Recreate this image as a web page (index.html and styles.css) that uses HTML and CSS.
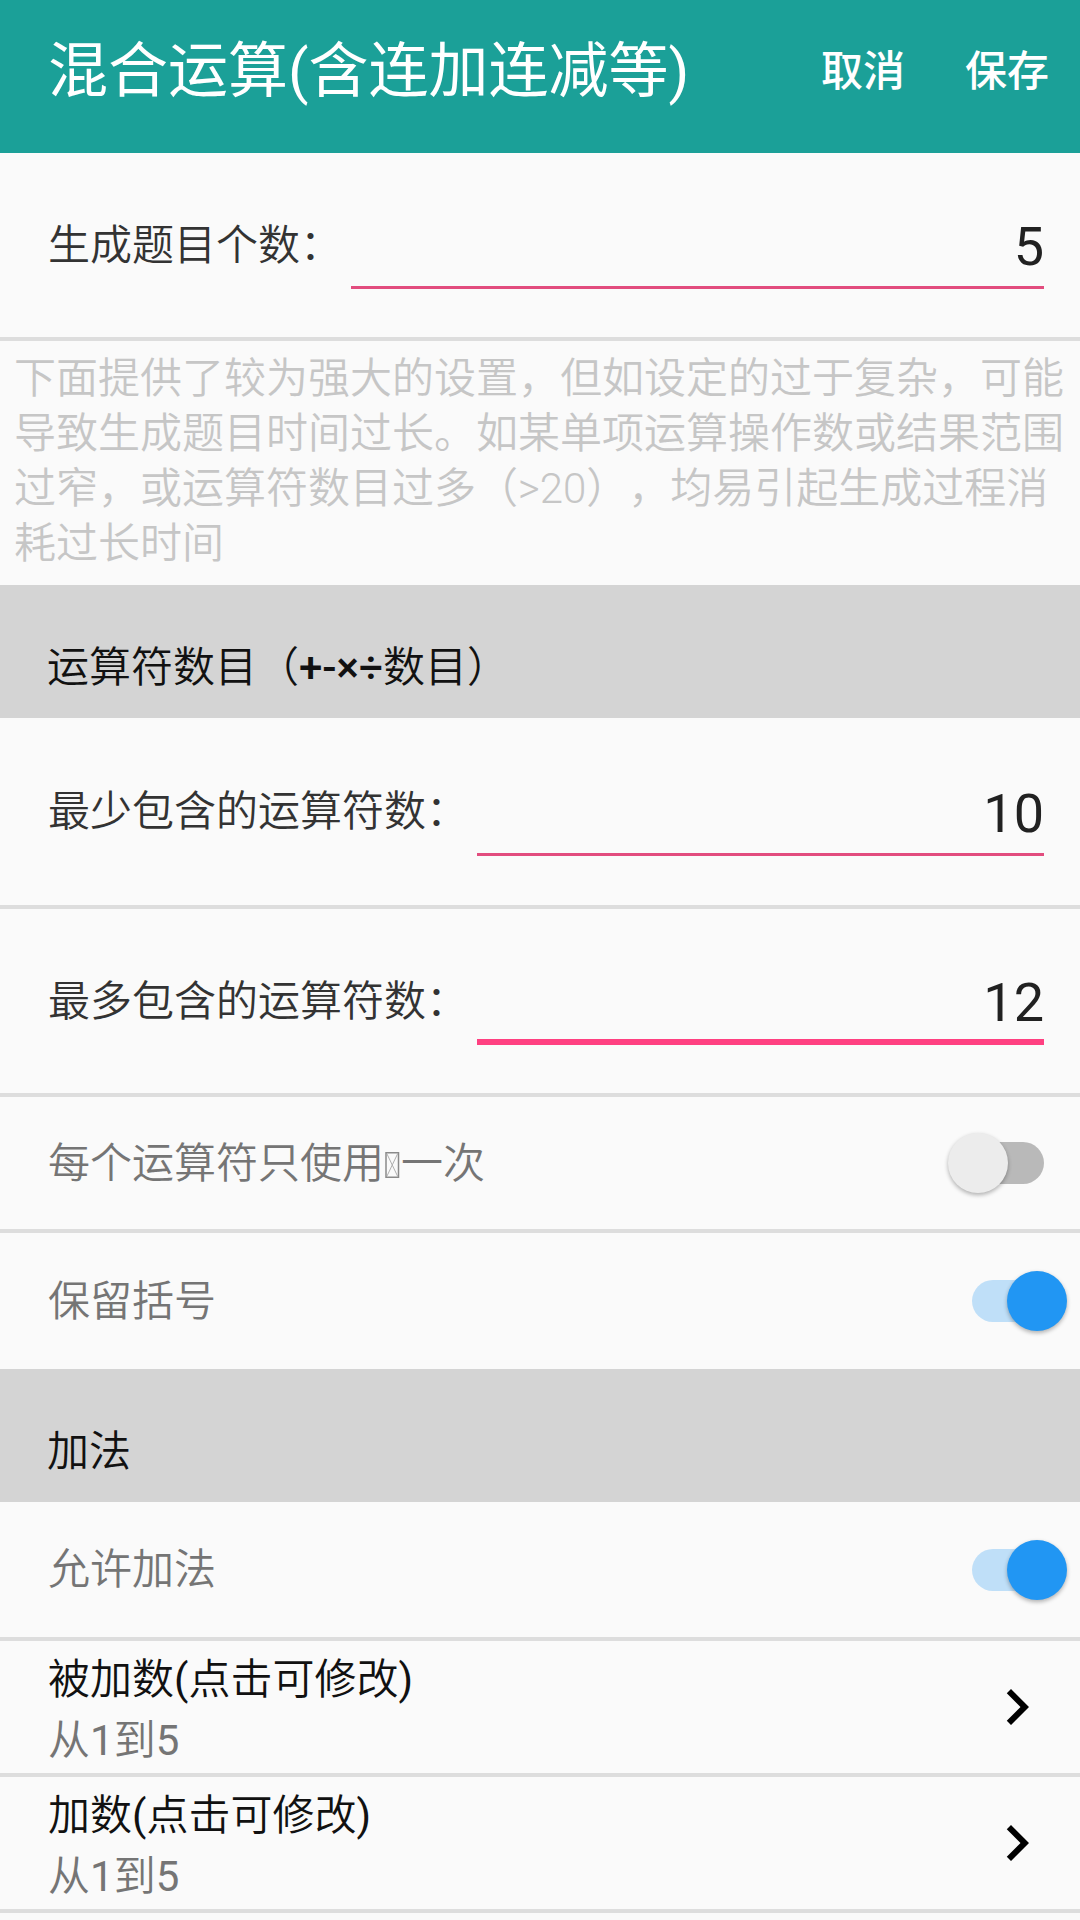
FILE: index.html
```html
<!DOCTYPE html>
<html lang="zh-CN">
<head>
<meta charset="utf-8">
<title>混合运算</title>
<link rel="stylesheet" href="styles.css">
</head>
<body>
<header class="toolbar">
  <div class="toolbar-title">混合运算(含连加连减等)</div>
  <div class="toolbar-actions">
    <span>取消</span>
    <span>保存</span>
  </div>
</header>

<div class="edit-row h184">
  <div class="edit-label">生成题目个数：</div>
  <div class="edit-input">5</div>
</div>
<div class="divider"></div>

<div class="desc">下面提供了较为强大的设置，但如设定的过于复杂，可能导致生成题目时间过长。如某单项运算操作数或结果范围过窄，或运算符数目过多（&gt;20），均易引起生成过程消耗过长时间</div>

<div class="section">运算符数目（<span class="ops">+-×÷</span>数目）</div>

<div class="edit-row h187">
  <div class="edit-label">最少包含的运算符数：</div>
  <div class="edit-input">10</div>
</div>
<div class="divider"></div>

<div class="edit-row h184">
  <div class="edit-label">最多包含的运算符数：</div>
  <div class="edit-input focused">12</div>
</div>
<div class="divider"></div>

<div class="toggle-row h132">
  <div class="toggle-label">每个运算符只使用<svg class="tofu" width="17" height="26" viewBox="0 0 17 26"><rect x="2" y="0.75" width="12.5" height="24.5" fill="none" stroke="#8a8a8a" stroke-width="1.5"/><path d="M3 2L13.5 24M13.5 2L3 24" stroke="#b0b0b0" stroke-width="1"/></svg>一次</div>
  <div class="switch"><div class="switch-track"></div><div class="switch-thumb"></div></div>
</div>
<div class="divider"></div>

<div class="toggle-row h136">
  <div class="toggle-label">保留括号</div>
  <div class="switch on"><div class="switch-track"></div><div class="switch-thumb"></div></div>
</div>

<div class="section">加法</div>

<div class="toggle-row h135">
  <div class="toggle-label">允许加法</div>
  <div class="switch on"><div class="switch-track"></div><div class="switch-thumb"></div></div>
</div>
<div class="divider"></div>

<div class="nav-row">
  <div class="nav-text">
    <div class="nav-title">被加数<span class="lat">(</span>点击可修改<span class="lat">)</span></div>
    <div class="nav-sub">从<span class="lat">1</span>到<span class="lat">5</span></div>
  </div>
  <svg class="chevron" width="72" height="72" viewBox="0 0 24 24"><path d="M10 6L8.59 7.41 13.17 12l-4.58 4.59L10 18l6-6z" fill="#000"/></svg>
</div>
<div class="divider"></div>

<div class="nav-row">
  <div class="nav-text">
    <div class="nav-title">加数<span class="lat">(</span>点击可修改<span class="lat">)</span></div>
    <div class="nav-sub">从<span class="lat">1</span>到<span class="lat">5</span></div>
  </div>
  <svg class="chevron" width="72" height="72" viewBox="0 0 24 24"><path d="M10 6L8.59 7.41 13.17 12l-4.58 4.59L10 18l6-6z" fill="#000"/></svg>
</div>
<div class="divider"></div>
</body>
</html>
```

FILE: styles.css
```css
* {
  box-sizing: border-box;
}

html, body {
  margin: 0;
  padding: 0;
}

body {
  width: 1080px;
  min-height: 1920px;
  background: #fafafa;
  font-family: Roboto, "Noto Sans CJK SC", sans-serif;
  text-spacing-trim: space-all;
  overflow: hidden;
}

.toolbar {
  height: 153px;
  background: #1ba098;
  color: #ffffff;
  display: flex;
  align-items: center;
  padding: 0 31px 10px 48px;
}

.toolbar-title {
  flex: 1;
  font-size: 60px;
  line-height: 70px;
  white-space: nowrap;
}

.toolbar-actions {
  display: flex;
  gap: 60px;
  font-size: 42px;
  line-height: 49px;
  font-weight: 500;
}

.divider {
  height: 4px;
  background: #dddddd;
}

.edit-row {
  display: flex;
  align-items: center;
  padding: 0 36px 0 48px;
}

.h184 { height: 184px; }
.h187 { height: 187px; }
.h132 { height: 132px; }
.h135 { height: 135px; }
.h136 { height: 136px; }

.lat {
  font-weight: 400;
}

.ops {
  font-weight: 500;
}

.edit-label {
  font-size: 42px;
  line-height: 49px;
  font-weight: 350;
  color: #333333;
  white-space: nowrap;
}

.edit-input {
  flex: 1;
  margin-left: 9px;
  margin-top: 14px;
  font-size: 54px;
  line-height: 63px;
  color: #212121;
  text-align: right;
  padding-bottom: 8px;
  border-bottom: 3px solid #e24c7e;
}

.edit-input.focused {
  padding-bottom: 5px;
  border-bottom: 6px solid #ff4081;
}

.desc {
  height: 244px;
  padding: 10px 12px 0 14px;
  font-size: 42px;
  line-height: 55px;
  font-weight: 350;
  color: #c6c6c6;
  overflow: hidden;
}

.section {
  height: 133px;
  background: #d4d4d4;
  padding: 58px 0 0 47px;
  font-size: 42px;
  line-height: 49px;
  font-weight: 350;
  color: #111111;
  overflow: hidden;
}

.toggle-row {
  display: flex;
  align-items: center;
  padding: 0 12px 0 48px;
}

.toggle-label {
  flex: 1;
  font-size: 42px;
  line-height: 49px;
  font-weight: 350;
  color: #757575;
  white-space: nowrap;
}

.tofu {
  vertical-align: baseline;
}

.switch {
  position: relative;
  width: 120px;
  height: 60px;
  flex: none;
}

.switch-track {
  position: absolute;
  left: 24px;
  top: 9px;
  width: 72px;
  height: 42px;
  border-radius: 21px;
  background: #b9b9b9;
}

.switch-thumb {
  position: absolute;
  left: 0;
  top: 0;
  width: 60px;
  height: 60px;
  border-radius: 50%;
  background: #ececec;
  box-shadow: 0 2px 4px rgba(0, 0, 0, 0.3);
}

.switch.on .switch-track {
  background: #bfdff8;
}

.switch.on .switch-thumb {
  left: 59px;
  background: #2196f3;
}

.nav-row {
  height: 132px;
  display: flex;
  align-items: center;
  padding: 0 27px 0 48px;
}

.nav-text {
  flex: 1;
  margin-top: 5px;
  font-weight: 350;
}

.nav-title {
  font-size: 42px;
  line-height: 49px;
  color: #111111;
  white-space: nowrap;
}

.nav-sub {
  margin-top: 12px;
  font-size: 42px;
  line-height: 49px;
  color: #757575;
}

.chevron {
  flex: none;
  display: block;
}
```
